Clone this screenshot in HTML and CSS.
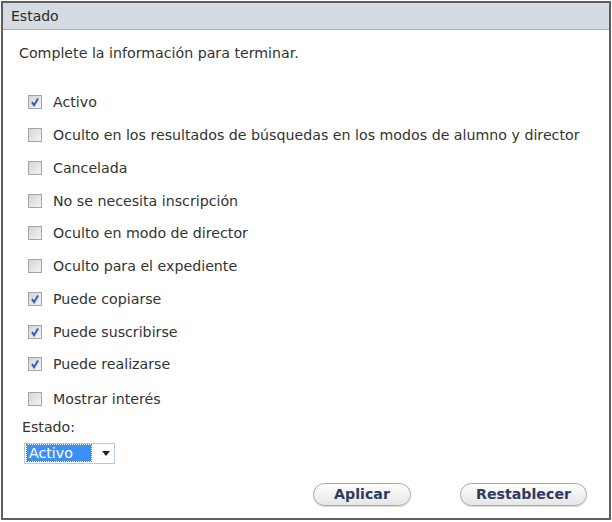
FILE: index.html
```html
<!DOCTYPE html>
<html lang="es">
<head>
    <meta charset="UTF-8">
    <title>Estado</title>
    <link rel="stylesheet" href="styles.css">
</head>
<body>

    <div class="panel">
        <div class="panel-header">Estado</div>

        <div class="panel-body">
            <p class="intro">Complete la información para terminar.</p>

            <ul class="options">
                <li class="option"><span class="box checked"><svg viewBox="0 0 13 13"><path d="M3.2 6.6 L5.5 10 L9.8 2.6" /></svg></span>Activo</li>
                <li class="option"><span class="box"></span>Oculto en los resultados de búsquedas en los modos de alumno y director</li>
                <li class="option"><span class="box"></span>Cancelada</li>
                <li class="option"><span class="box"></span>No se necesita inscripción</li>
                <li class="option"><span class="box"></span>Oculto en modo de director</li>
                <li class="option"><span class="box"></span>Oculto para el expediente</li>
                <li class="option"><span class="box checked"><svg viewBox="0 0 13 13"><path d="M3.2 6.6 L5.5 10 L9.8 2.6" /></svg></span>Puede copiarse</li>
                <li class="option"><span class="box checked"><svg viewBox="0 0 13 13"><path d="M3.2 6.6 L5.5 10 L9.8 2.6" /></svg></span>Puede suscribirse</li>
                <li class="option"><span class="box checked"><svg viewBox="0 0 13 13"><path d="M3.2 6.6 L5.5 10 L9.8 2.6" /></svg></span>Puede realizarse</li>
                <li class="option last"><span class="box"></span>Mostrar interés</li>
            </ul>

            <div class="field">
                <label class="field-label">Estado:</label>
                <div class="select">
                    <span class="select-value">Activo</span>
                    <span class="select-arrow"></span>
                </div>
            </div>

            <div class="actions">
                <button class="btn btn-apply">Aplicar</button>
                <button class="btn btn-reset">Restablecer</button>
            </div>
        </div>
    </div>

</body>
</html>
```

FILE: styles.css
```css
body {
    margin: 0;
    background-color: #fff;
    font-family: "DejaVu Sans", Verdana, sans-serif;
    font-size: 14.2px;
    color: #333;
}

.panel {
    width: 606px;
    height: 515px;
    margin: 1px 0 0 1px;
    border: 2px solid #5e5e5e;
    display: flex;
    flex-direction: column;
}

.panel-header {
    height: 26px;
    line-height: 26px;
    padding-left: 8px;
    background-color: #d5dbe3;
    border-bottom: 1px solid #a9b0b8;
    color: #2a2a2a;
    font-size: 14px;
}

.panel-body {
    flex: 1;
    padding: 0 0 0 16px;
    display: flex;
    flex-direction: column;
}

.intro {
    margin: 14px 0 0 0;
    line-height: 18px;
}

.options {
    list-style: none;
    margin: 24px 0 0 0;
    padding: 0 0 0 9px;
}

.option {
    height: 32.75px;
    display: flex;
    align-items: center;
}

.option.last {
    margin-top: 2px;
}

.box {
    width: 12px;
    height: 12px;
    margin-right: 11px;
    border: 1px solid #a5a5a5;
    background: linear-gradient(135deg, #d4d4d4, #f4f4f4);
    flex-shrink: 0;
}

.box svg {
    width: 12px;
    height: 12px;
    display: block;
}

.box path {
    fill: none;
    stroke: #3a5ab4;
    stroke-width: 2.1;
}

.field {
    margin-top: 3px;
    padding-left: 3px;
}

.field-label {
    display: block;
    line-height: 16px;
}

.select {
    margin: 8px 0 0 2px;
    width: 89px;
    height: 19px;
    border: 1px solid #b9c9dc;
    display: flex;
    align-items: center;
}

.select-value {
    margin-left: 2px;
    width: 62px;
    height: 16px;
    line-height: 16px;
    padding-left: 2px;
    background-color: #3b8ff5;
    color: #fff;
    outline: 1px dotted #b06a4a;
}

.select-arrow {
    margin-left: 11px;
    width: 0;
    height: 0;
    border-left: 4px solid transparent;
    border-right: 4px solid transparent;
    border-top: 5px solid #222;
}

.actions {
    margin-top: 19px;
    display: flex;
    justify-content: flex-end;
    gap: 49px;
    padding-right: 22px;
}

.btn {
    height: 23px;
    padding: 0;
    border: 1px solid #a8a8a8;
    border-radius: 12px;
    background: linear-gradient(#fdfdfd, #e6e6e6);
    box-shadow: 0 1px 1px rgba(0, 0, 0, 0.15);
    font-family: "DejaVu Sans", Verdana, sans-serif;
    font-size: 14.2px;
    font-weight: bold;
    color: #2f3a62;
}

.btn-apply {
    width: 98px;
}

.btn-reset {
    width: 127px;
}
```
